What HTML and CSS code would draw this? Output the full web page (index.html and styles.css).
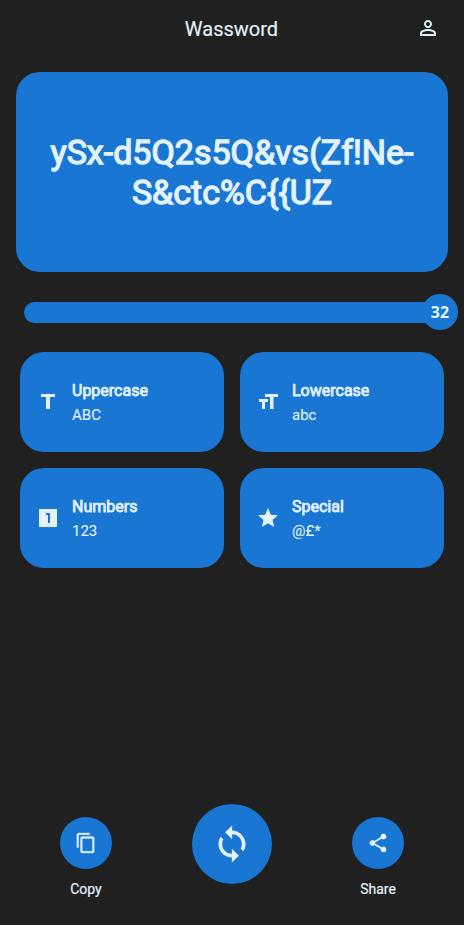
FILE: index.html
```html
<!DOCTYPE html>
<html lang="en">
<head>
<meta charset="utf-8">
<title>Wassword</title>
<link rel="stylesheet" href="styles.css">
</head>
<body>
<div class="app">
  <header class="bar">
    <h1 class="title">Wassword</h1>
    <button class="profile" aria-label="Profile"><svg class="icon" viewBox="0 0 24 24"><path d="M12 5.900c1.160 0 2.100.940 2.100 2.100s-.940 2.100-2.100 2.100-2.100-.940-2.100-2.100.940-2.100 2.100-2.100m0 9c2.970 0 6.100 1.460 6.100 2.100v1.100H5.900V17c0-.640 3.130-2.100 6.100-2.100M12 4C9.790 4 8 5.790 8 8s1.790 4 4 4 4-1.790 4-4-1.790-4-4-4zm0 9c-2.670 0-8 1.340-8 4v3h16v-3c0-2.660-5.330-4-8-4z"/></svg></button>
  </header>
  <section class="password"><div>ySx-d5Q2s5Q&amp;vs(Zf!Ne-</div><div>S&amp;ctc%C{{UZ</div></section>
  <div class="slider"><div class="track"></div><div class="thumb">32</div></div>
  <section class="options">
    <div class="option">
      <svg class="icon" viewBox="0 0 24 24"><path d="M5 4v3h5v12h4V7h5V4z"/></svg>
      <div class="text"><div class="name">Uppercase</div><div class="sample">ABC</div></div>
    </div>
    <div class="option">
      <svg class="icon" viewBox="0 0 24 24"><path d="M9 4v3h5v12h3.500V7h4.500V4H9zm-6 8h3v7h3v-7h3V9H3v3z"/></svg>
      <div class="text"><div class="name">Lowercase</div><div class="sample">abc</div></div>
    </div>
    <div class="option">
      <svg class="icon" viewBox="0 0 24 24"><path d="M20 3H4c-.600 0-1 .4-1 1v16c0 .600.4 1 1 1h16c.600 0 1-.4 1-1V4c0-.600-.4-1-1-1zm-6 14h-2V9h-2V7h4v10z"/></svg>
      <div class="text"><div class="name">Numbers</div><div class="sample">123</div></div>
    </div>
    <div class="option">
      <svg class="icon" viewBox="0 0 24 24"><path d="M12 17.270L18.180 21l-1.640-7.030L22 9.240l-7.190-.610L12 2 9.190 8.630 2 9.240l5.460 4.730L5.820 21z"/></svg>
      <div class="text"><div class="name">Special</div><div class="sample">@£*</div></div>
    </div>
  </section>
  <footer class="actions">
    <div class="action">
      <button class="round" aria-label="Copy"><svg class="icon small" viewBox="0 0 24 24"><path d="M16 1H4c-1.100 0-2 .9-2 2v14h2V3h12V1zm3 4H8c-1.100 0-2 .9-2 2v14c0 1.100.9 2 2 2h11c1.100 0 2-.9 2-2V7c0-1.100-.9-2-2-2zm0 16H8V7h11v14z"/></svg></button>
      <span class="label">Copy</span>
    </div>
    <button class="round big" aria-label="Generate"><svg class="icon large" viewBox="0 0 24 24"><path d="M12 4V1L8 5l4 4V6c3.310 0 6 2.690 6 6 0 1.010-.250 1.970-.7 2.800l1.460 1.460C19.540 15.030 20 13.570 20 12c0-4.420-3.580-8-8-8zm0 14c-3.310 0-6-2.690-6-6 0-1.010.250-1.970.7-2.800L5.240 7.740C4.460 8.970 4 10.430 4 12c0 4.420 3.580 8 8 8v3l4-4-4-4v3z"/></svg></button>
    <div class="action">
      <button class="round" aria-label="Share"><svg class="icon small" viewBox="0 0 24 24"><path d="M18 16.080c-.760 0-1.440.3-1.960.770L8.910 12.700c.050-.230.090-.460.090-.7s-.040-.470-.090-.7l7.050-4.110c.540.5 1.250.810 2.040.810 1.660 0 3-1.340 3-3s-1.340-3-3-3-3 1.340-3 3c0 .240.040.470.090.7L8.040 9.810C7.500 9.310 6.790 9 6 9c-1.660 0-3 1.340-3 3s1.340 3 3 3c.790 0 1.500-.310 2.040-.810l7.120 4.160c-.050.210-.080.430-.080.650 0 1.610 1.310 2.920 2.920 2.920s2.920-1.310 2.920-2.920-1.310-2.920-2.920-2.920z"/></svg></button>
      <span class="label">Share</span>
    </div>
  </footer>
</div>
</body>
</html>
```

FILE: styles.css
```css
* { box-sizing: border-box; }
body { margin: 0; background: #202020; color: #e3f2fd; font-family: Roboto, sans-serif; }
button { padding: 0; border: 0; background: none; color: inherit; }
.app { height: 925px; display: flex; flex-direction: column; }
.icon { display: block; flex: none; width: 24px; height: 24px; fill: currentColor; }
.small { width: 22px; height: 22px; stroke: currentColor; stroke-width: 0.3px; }
.large { width: 40px; height: 40px; stroke: currentColor; stroke-width: 0.2px; }
.bar { height: 56px; display: grid; grid-template-columns: 1fr auto 1fr; align-items: center; padding: 0 24px; }
.title { grid-column: 2; margin: 2px 1px 0 0; font-size: 20px; font-weight: 400; line-height: 24px; -webkit-text-stroke: 0.15px currentColor; }
.profile { justify-self: end; }
.password {
  height: 200px; margin: 16px 16px 0; border-radius: 24px; background: #1976d2;
  display: flex; flex-direction: column; justify-content: center; text-align: center;
  font-size: 34px; line-height: 40px; -webkit-text-stroke: 1.3px currentColor;
}
.slider { height: 36px; margin: 22px 6px 0 24px; display: flex; align-items: center; }
.track { flex: 1; height: 21px; margin-right: -18px; border-radius: 10.5px; background: #1976d2; }
.thumb {
  width: 36px; height: 36px; border-radius: 50%; background: #1976d2;
  font: 700 16px/36px "Noto Sans", sans-serif; text-align: center;
}
.options { display: grid; grid-template-columns: 1fr 1fr; grid-auto-rows: 100px; gap: 16px; padding: 22px 20px 0; }
.option { display: flex; align-items: center; gap: 12px; padding: 0 16px; border-radius: 24px; background: #1976d2; }
.text { padding-top: 2px; }
.name { font-size: 16px; line-height: 24px; -webkit-text-stroke: 0.75px currentColor; }
.sample { font-size: 15px; line-height: 24px; -webkit-text-stroke: 0.1px currentColor; }
.actions { margin: auto 60px 27px; display: flex; justify-content: space-between; align-items: flex-start; }
.action { width: 52px; padding-top: 12.5px; display: flex; flex-direction: column; align-items: center; }
.round { width: 52px; height: 52px; border-radius: 50%; background: #1976d2; display: grid; place-items: center; }
.big { width: 80px; height: 80px; }
.label { margin-top: 12.5px; font-size: 14px; line-height: 17px; -webkit-text-stroke: 0.2px currentColor; }
```
